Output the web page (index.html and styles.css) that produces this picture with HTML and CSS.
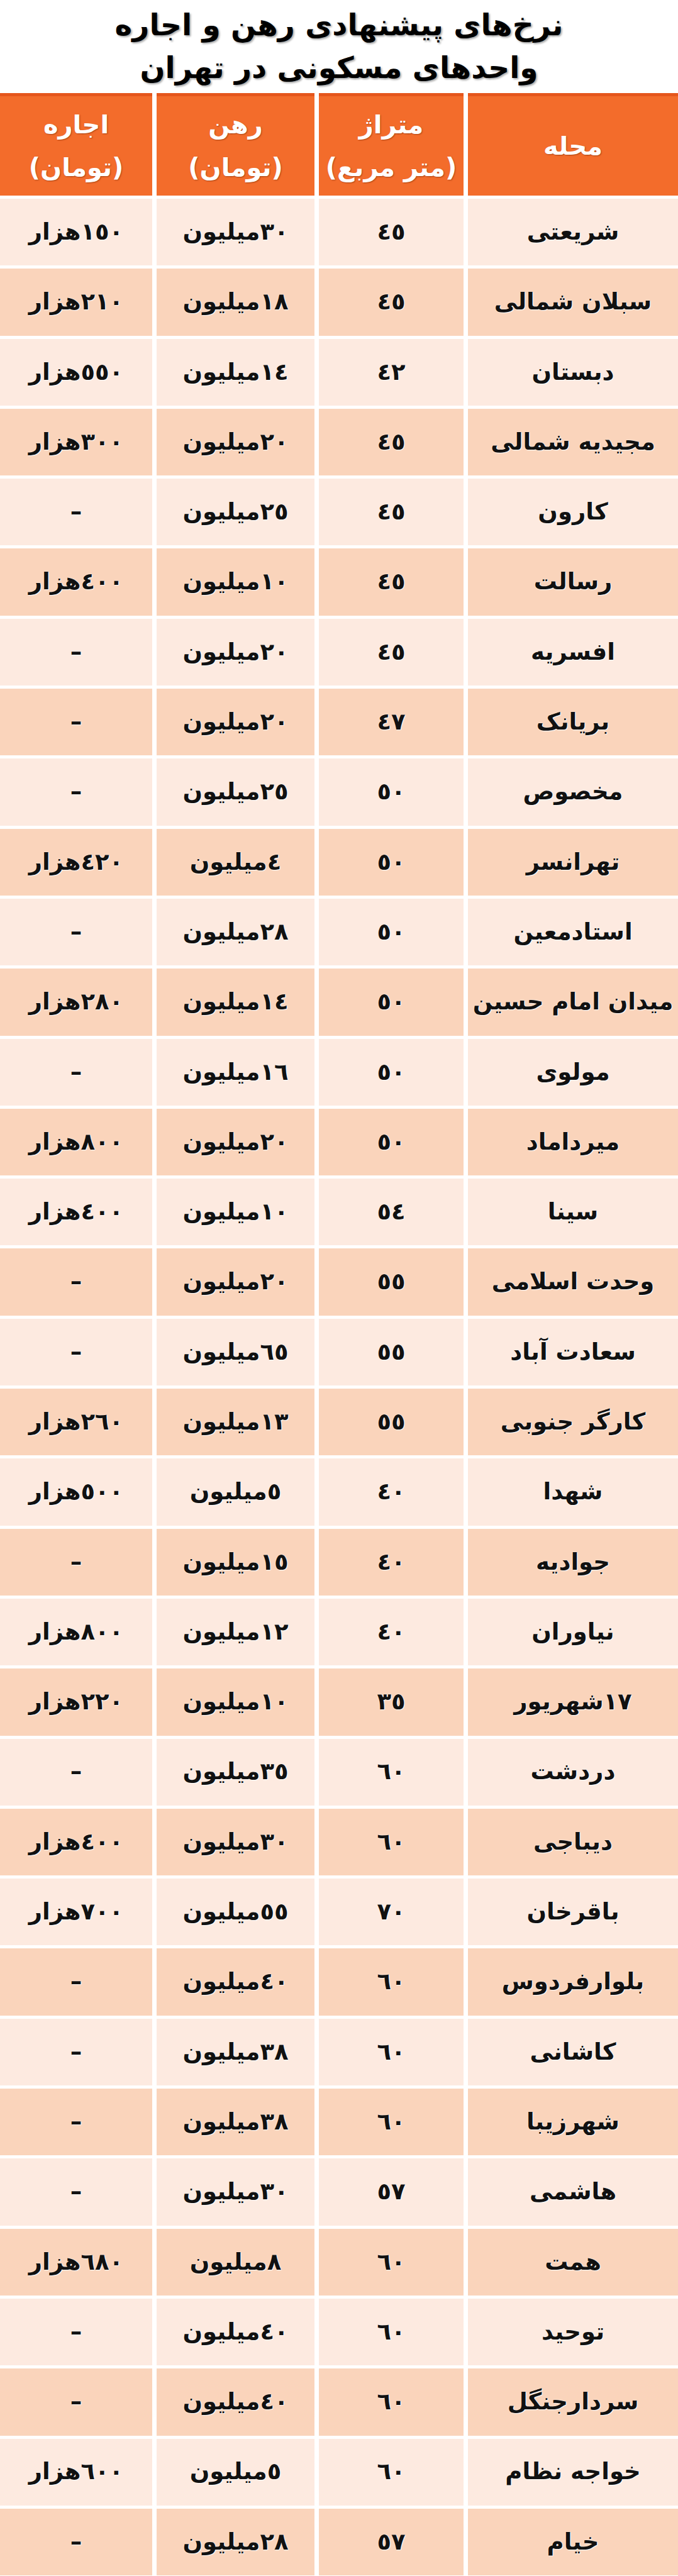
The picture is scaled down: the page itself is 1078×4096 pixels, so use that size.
FILE: index.html
```html
<!DOCTYPE html>
<html lang="fa" dir="rtl">
<head>
<meta charset="utf-8">
<title>نرخ‌های پیشنهادی رهن و اجاره واحدهای مسکونی در تهران</title>
<link rel="stylesheet" href="styles.css">
</head>
<body>
<main class="sheet">
  <h1 class="title">
    <span class="title-line">نرخ‌های پیشنهادی رهن و اجاره</span>
    <span class="title-line">واحدهای مسکونی در تهران</span>
  </h1>
  <div class="table">
    <div class="row head">
      <div class="cell">محله</div>
      <div class="cell"><span>متراژ</span><span>(متر مربع)</span></div>
      <div class="cell"><span>رهن</span><span>(تومان)</span></div>
      <div class="cell"><span>اجاره</span><span>(تومان)</span></div>
    </div>
    <div class="row light"><div class="cell">شریعتی</div><div class="cell">٤٥</div><div class="cell">٣٠میلیون</div><div class="cell">١٥٠هزار</div></div>
    <div class="row dark"><div class="cell">سبلان شمالی</div><div class="cell">٤٥</div><div class="cell">١٨میلیون</div><div class="cell">٢١٠هزار</div></div>
    <div class="row light"><div class="cell">دبستان</div><div class="cell">٤٢</div><div class="cell">١٤میلیون</div><div class="cell">٥٥٠هزار</div></div>
    <div class="row dark"><div class="cell">مجیدیه شمالی</div><div class="cell">٤٥</div><div class="cell">٢٠میلیون</div><div class="cell">٣٠٠هزار</div></div>
    <div class="row light"><div class="cell">کارون</div><div class="cell">٤٥</div><div class="cell">٢٥میلیون</div><div class="cell">–</div></div>
    <div class="row dark"><div class="cell">رسالت</div><div class="cell">٤٥</div><div class="cell">١٠میلیون</div><div class="cell">٤٠٠هزار</div></div>
    <div class="row light"><div class="cell">افسریه</div><div class="cell">٤٥</div><div class="cell">٢٠میلیون</div><div class="cell">–</div></div>
    <div class="row dark"><div class="cell">بریانک</div><div class="cell">٤٧</div><div class="cell">٢٠میلیون</div><div class="cell">–</div></div>
    <div class="row light"><div class="cell">مخصوص</div><div class="cell">٥٠</div><div class="cell">٢٥میلیون</div><div class="cell">–</div></div>
    <div class="row dark"><div class="cell">تهرانسر</div><div class="cell">٥٠</div><div class="cell">٤میلیون</div><div class="cell">٤٢٠هزار</div></div>
    <div class="row light"><div class="cell">استادمعین</div><div class="cell">٥٠</div><div class="cell">٢٨میلیون</div><div class="cell">–</div></div>
    <div class="row dark"><div class="cell">میدان امام حسین</div><div class="cell">٥٠</div><div class="cell">١٤میلیون</div><div class="cell">٢٨٠هزار</div></div>
    <div class="row light"><div class="cell">مولوی</div><div class="cell">٥٠</div><div class="cell">١٦میلیون</div><div class="cell">–</div></div>
    <div class="row dark"><div class="cell">میرداماد</div><div class="cell">٥٠</div><div class="cell">٢٠میلیون</div><div class="cell">٨٠٠هزار</div></div>
    <div class="row light"><div class="cell">سینا</div><div class="cell">٥٤</div><div class="cell">١٠میلیون</div><div class="cell">٤٠٠هزار</div></div>
    <div class="row dark"><div class="cell">وحدت اسلامی</div><div class="cell">٥٥</div><div class="cell">٢٠میلیون</div><div class="cell">–</div></div>
    <div class="row light"><div class="cell">سعادت آباد</div><div class="cell">٥٥</div><div class="cell">٦٥میلیون</div><div class="cell">–</div></div>
    <div class="row dark"><div class="cell">کارگر جنوبی</div><div class="cell">٥٥</div><div class="cell">١٣میلیون</div><div class="cell">٢٦٠هزار</div></div>
    <div class="row light"><div class="cell">شهدا</div><div class="cell">٤٠</div><div class="cell">٥میلیون</div><div class="cell">٥٠٠هزار</div></div>
    <div class="row dark"><div class="cell">جوادیه</div><div class="cell">٤٠</div><div class="cell">١٥میلیون</div><div class="cell">–</div></div>
    <div class="row light"><div class="cell">نیاوران</div><div class="cell">٤٠</div><div class="cell">١٢میلیون</div><div class="cell">٨٠٠هزار</div></div>
    <div class="row dark"><div class="cell">١٧شهریور</div><div class="cell">٣٥</div><div class="cell">١٠میلیون</div><div class="cell">٢٢٠هزار</div></div>
    <div class="row light"><div class="cell">دردشت</div><div class="cell">٦٠</div><div class="cell">٣٥میلیون</div><div class="cell">–</div></div>
    <div class="row dark"><div class="cell">دیباجی</div><div class="cell">٦٠</div><div class="cell">٣٠میلیون</div><div class="cell">٤٠٠هزار</div></div>
    <div class="row light"><div class="cell">باقرخان</div><div class="cell">٧٠</div><div class="cell">٥٥میلیون</div><div class="cell">٧٠٠هزار</div></div>
    <div class="row dark"><div class="cell">بلوارفردوس</div><div class="cell">٦٠</div><div class="cell">٤٠میلیون</div><div class="cell">–</div></div>
    <div class="row light"><div class="cell">کاشانی</div><div class="cell">٦٠</div><div class="cell">٣٨میلیون</div><div class="cell">–</div></div>
    <div class="row dark"><div class="cell">شهرزیبا</div><div class="cell">٦٠</div><div class="cell">٣٨میلیون</div><div class="cell">–</div></div>
    <div class="row light"><div class="cell">هاشمی</div><div class="cell">٥٧</div><div class="cell">٣٠میلیون</div><div class="cell">–</div></div>
    <div class="row dark"><div class="cell">همت</div><div class="cell">٦٠</div><div class="cell">٨میلیون</div><div class="cell">٦٨٠هزار</div></div>
    <div class="row light"><div class="cell">توحید</div><div class="cell">٦٠</div><div class="cell">٤٠میلیون</div><div class="cell">–</div></div>
    <div class="row dark"><div class="cell">سردارجنگل</div><div class="cell">٦٠</div><div class="cell">٤٠میلیون</div><div class="cell">–</div></div>
    <div class="row light"><div class="cell">خواجه نظام</div><div class="cell">٦٠</div><div class="cell">٥میلیون</div><div class="cell">٦٠٠هزار</div></div>
    <div class="row dark"><div class="cell">خیام</div><div class="cell">٥٧</div><div class="cell">٢٨میلیون</div><div class="cell">–</div></div>
  </div>
</main>
</body>
</html>
```
FILE: styles.css
```css
html, body {
  margin: 0;
  padding: 0;
  background: #ffffff;
}

body {
  font-family: "DejaVu Sans", sans-serif;
  color: #111111;
}

.sheet {
  width: 1078px;
  overflow: hidden;
}

.title {
  margin: 0;
  height: 148px;
  display: flex;
  flex-direction: column;
  align-items: center;
  justify-content: center;
  font-size: 47px;
  font-weight: bold;
  line-height: 68px;
  color: #000000;
  text-shadow: 2px 2px 3px rgba(0, 0, 0, 0.35);
}

.title-line {
  display: block;
}

.table {
  display: flex;
  flex-direction: column;
  gap: 5px;
}

.row {
  display: grid;
  grid-template-columns: 334px 230px 251px 1fr;
  column-gap: 7px;
  height: 106.3px;
}

.cell {
  display: flex;
  flex-direction: column;
  align-items: center;
  justify-content: center;
  font-size: 37px;
  font-weight: bold;
  line-height: 1.2;
  text-shadow: 0 0 2px #ffffff, 1px 1px 1px rgba(255, 255, 255, 0.9);
}

.row.head {
  height: 163px;
}

.head .cell {
  background: #f36c2b;
  border-top: 5px solid #e5561c;
  color: #ffffff;
  font-size: 40px;
  line-height: 68px;
  text-shadow: 1px 1px 2px rgba(110, 35, 0, 0.55);
}

.light .cell {
  background: #fdeae0;
}

.dark .cell {
  background: #fad4bb;
}
```
